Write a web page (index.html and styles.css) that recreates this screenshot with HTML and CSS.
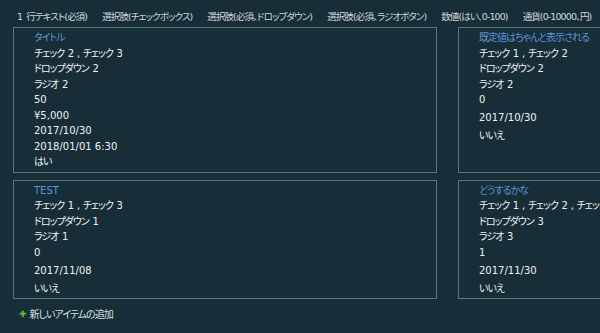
FILE: index.html
```html
<!DOCTYPE html>
<html lang="ja">
<head>
    <meta charset="UTF-8">
    <meta name="viewport" content="width=device-width, initial-scale=1.0">
    <title>アイテム一覧</title>
    <link rel="stylesheet" href="styles.css">
</head>
<body>

<!-- Column headers -->
<div class="fields">
    <span>1 行テキスト(必須)</span>
    <span>選択肢(チェックボックス)</span>
    <span>選択肢(必須、ドロップダウン)</span>
    <span>選択肢(必須、ラジオボタン)</span>
    <span>数値(はい、0-100)</span>
    <span>通貨(0-10000、円)</span>
</div>

<!-- Items -->
<div class="items">
    <div class="item">
        <div class="row ja title">タイトル</div>
        <div class="row ja">チェック 2 , チェック 3</div>
        <div class="row ja">ドロップダウン 2</div>
        <div class="row ja">ラジオ 2</div>
        <div class="row">50</div>
        <div class="row">¥5,000</div>
        <div class="row">2017/10/30</div>
        <div class="row">2018/01/01 6:30</div>
        <div class="row ja">はい</div>
    </div>
    <div class="item">
        <div class="row ja title">既定値はちゃんと表示される</div>
        <div class="row ja">チェック 1 , チェック 2</div>
        <div class="row ja">ドロップダウン 2</div>
        <div class="row ja">ラジオ 2</div>
        <div class="row">0</div>
        <div class="row"></div>
        <div class="row">2017/10/30</div>
        <div class="row"></div>
        <div class="row ja">いいえ</div>
    </div>
    <div class="item">
        <div class="row title">TEST</div>
        <div class="row ja">チェック 1 , チェック 3</div>
        <div class="row ja">ドロップダウン 1</div>
        <div class="row ja">ラジオ 1</div>
        <div class="row">0</div>
        <div class="row"></div>
        <div class="row">2017/11/08</div>
        <div class="row"></div>
        <div class="row ja">いいえ</div>
    </div>
    <div class="item">
        <div class="row ja title">どうするかな</div>
        <div class="row ja">チェック 1 , チェック 2 , チェック 3</div>
        <div class="row ja">ドロップダウン 3</div>
        <div class="row ja">ラジオ 3</div>
        <div class="row">1</div>
        <div class="row"></div>
        <div class="row">2017/11/30</div>
        <div class="row"></div>
        <div class="row ja">いいえ</div>
    </div>
</div>

<a href="#" class="add-item"><span class="plus">✚</span>新しいアイテムの追加</a>

</body>
</html>
```

FILE: styles.css
```css
html, body {
    overflow: hidden;
}
body {
    font-family: "DejaVu Sans", "Noto Sans CJK JP", sans-serif;
    font-feature-settings: "palt";
    font-size: 10px;
    margin: 0;
    padding: 0;
    background-color: #172d37;
    color: #eef2f3;
    width: 600px;
    height: 333px;
}
.fields {
    display: flex;
    gap: 15px;
    padding: 9px 0 0 17px;
    height: 18px;
    line-height: 15px;
    font-size: 9.5px;
    letter-spacing: -0.9px;
    word-spacing: 2px;
    color: #cfd6d9;
    white-space: nowrap;
}
.items {
    display: grid;
    grid-template-columns: 424px 424px;
    column-gap: 21px;
    row-gap: 7px;
    padding-left: 13px;
    width: 900px;
}
.item {
    border: 1px solid #587680;
    padding: 2px 0 2px 20px;
}
.row {
    line-height: 15.5px;
    min-height: 2.5px;
    white-space: nowrap;
}
.ja {
    letter-spacing: -1px;
    word-spacing: 1.5px;
}
.title {
    color: #5f93d6;
}
.add-item {
    display: flex;
    align-items: center;
    margin: 7px 0 0 19px;
    color: #d9e0e3;
    letter-spacing: -1px;
    text-decoration: none;
}
.plus {
    color: #5dba3c;
    font-size: 9px;
    letter-spacing: 0;
    margin-right: 3px;
}
```
